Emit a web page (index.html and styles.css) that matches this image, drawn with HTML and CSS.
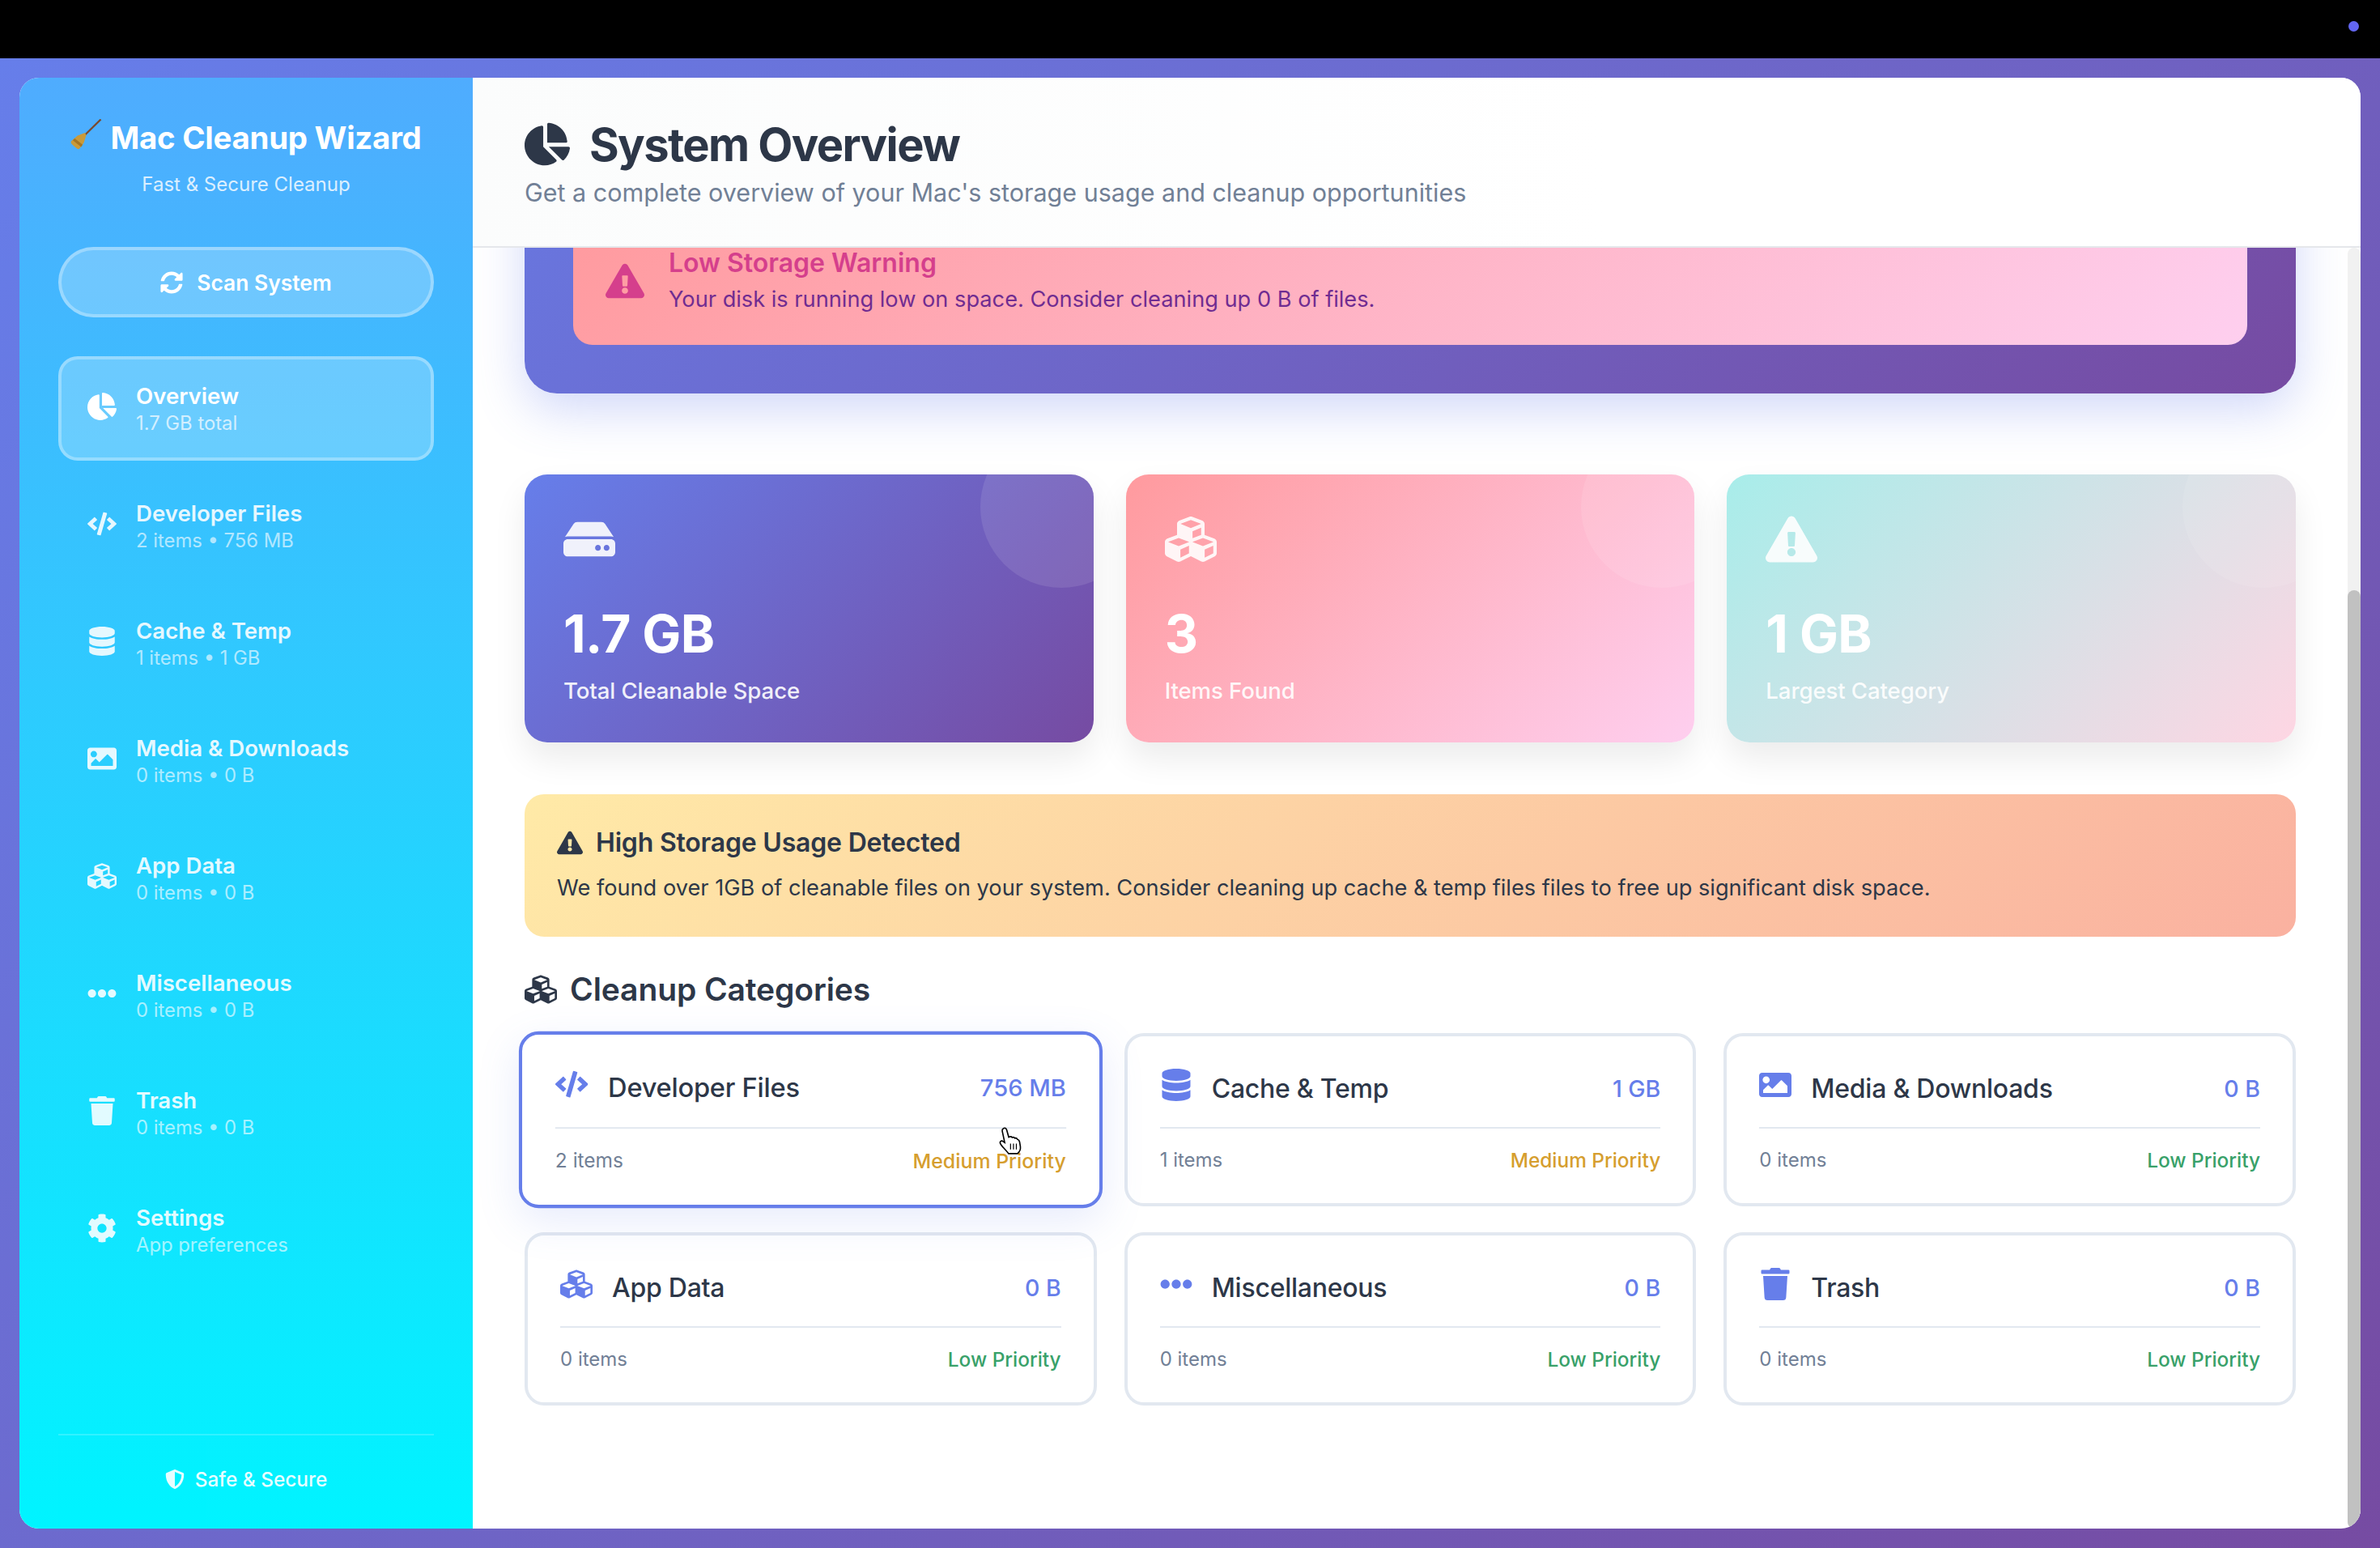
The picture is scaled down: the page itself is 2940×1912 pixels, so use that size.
FILE: index.html
```html
<!DOCTYPE html>
<html lang="en">
<head>
<meta charset="utf-8">
<title>Mac Cleanup Wizard</title>
<link rel="stylesheet" href="styles.css">
</head>
<body>
<svg class="sprite" aria-hidden="true">
  <symbol id="i-pie" viewBox="0 0 544 512"><path d="M527.79 288H290.5l158.03 158.03c6.04 6.04 15.98 6.53 22.19.68 38.7-36.46 65.32-85.61 73.13-140.86 1.34-9.46-6.51-17.85-16.06-17.85zm-15.83-64.8C503.72 103.74 408.26 8.28 288.8.04 279.68-.59 272 7.1 272 16.24V240h223.77c9.14 0 16.82-7.68 16.19-16.8zM224 288V50.71c0-9.55-8.39-17.4-17.84-16.06C86.99 51.49-4.1 155.6.14 280.37 4.5 408.51 114.83 513.59 243.03 511.98c50.4-.63 96.97-16.87 135.26-44.03 7.9-5.6 8.42-17.23 1.57-24.08L224 288z"/></symbol>
  <symbol id="i-sync" viewBox="0 0 512 512"><path d="M370.72 133.28C339.458 104.008 298.888 87.962 255.848 88c-77.458.068-144.328 53.178-162.791 126.85-1.344 5.363-6.122 9.15-11.651 9.15H24.103c-7.498 0-13.194-6.807-11.807-14.176C33.933 94.924 134.813 8 256 8c66.448 0 126.791 26.136 171.315 68.685L463.03 40.97C478.149 25.851 504 36.559 504 57.941V192c0 13.255-10.745 24-24 24H345.941c-21.382 0-32.09-25.851-16.971-40.971l41.75-41.749zM32 296h134.059c21.382 0 32.09 25.851 16.971 40.971l-41.75 41.75c31.262 29.273 71.835 45.319 114.876 45.28 77.418-.07 144.315-53.144 162.787-126.849 1.344-5.363 6.122-9.15 11.651-9.15h57.304c7.498 0 13.194 6.807 11.807 14.176C478.067 417.076 377.187 504 256 504c-66.448 0-126.791-26.136-171.315-68.685L48.97 471.03C33.851 486.149 8 475.441 8 454.059V320c0-13.255 10.745-24 24-24z"/></symbol>
  <symbol id="i-code" viewBox="0 0 640 512"><path d="M278.9 511.5l-61-17.7c-6.4-1.8-10-8.5-8.2-14.9L346.2 8.7c1.8-6.4 8.5-10 14.9-8.2l61 17.7c6.4 1.8 10 8.5 8.2 14.9L293.8 503.3c-1.9 6.4-8.5 10.1-14.9 8.2zm-114-112.2l43.5-46.4c4.6-4.9 4.3-12.7-.8-17.2L117 256l90.6-79.7c5.1-4.5 5.5-12.3.8-17.2l-43.5-46.4c-4.5-4.8-12.1-5.1-17-.5L3.8 247.2c-5.1 4.7-5.1 12.8 0 17.5l144.1 135.1c4.9 4.6 12.5 4.4 17-.5zm327.2.6l144.1-135.1c5.1-4.7 5.1-12.8 0-17.5L492.1 112.1c-4.8-4.5-12.4-4.3-17 .5L431.6 159c-4.6 4.9-4.3 12.7.8 17.2L523 256l-90.6 79.7c-5.1 4.5-5.5 12.3-.8 17.2l43.5 46.4c4.5 4.9 12.1 5.1 17 .6z"/></symbol>
  <symbol id="i-db" viewBox="0 0 448 512"><path d="M448 73.143v45.714C448 159.143 347.667 192 224 192S0 159.143 0 118.857V73.143C0 32.857 100.333 0 224 0s224 32.857 224 73.143zM448 176v102.857C448 319.143 347.667 352 224 352S0 319.143 0 278.857V176c48.125 33.143 136.208 48.572 224 48.572S399.874 209.143 448 176zm0 160v102.857C448 479.143 347.667 512 224 512S0 479.143 0 438.857V336c48.125 33.143 136.208 48.572 224 48.572S399.874 369.143 448 336z"/></symbol>
  <symbol id="i-image" viewBox="0 0 512 512"><path d="M464 448H48c-26.51 0-48-21.49-48-48V112c0-26.51 21.49-48 48-48h416c26.51 0 48 21.49 48 48v288c0 26.51-21.49 48-48 48zM112 120c-30.928 0-56 25.072-56 56s25.072 56 56 56 56-25.072 56-56-25.072-56-56-56zM64 384h384V272l-87.515-87.515c-4.686-4.686-12.284-4.686-16.971 0L208 320l-55.515-55.515c-4.686-4.686-12.284-4.686-16.971 0L64 336v48z"/></symbol>
  <symbol id="i-cubes" viewBox="0 0 512 512"><path d="M488.6 250.2L392 214V105.5c0-15-9.3-28.4-23.4-33.7l-100-37.5c-8.1-3.1-17.1-3.1-25.3 0l-100 37.5c-14.1 5.3-23.4 18.7-23.4 33.7V214l-96.6 36.2C9.3 255.5 0 268.9 0 283.9V394c0 13.6 7.7 26.1 19.9 32.2l100 50c10.1 5.1 22.1 5.1 32.2 0l103.9-52 103.9 52c10.1 5.1 22.1 5.1 32.2 0l100-50c12.2-6.1 19.9-18.6 19.9-32.2V283.9c0-15-9.3-28.4-23.4-33.7zM358 214.8l-85 31.9v-68.2l85-37v73.3zM154 104.1l102-38.2 102 38.2v.6l-102 41.4-102-41.4v-.6zm84 291.1l-85 42.5v-79.1l85-38.8v75.4zm0-112l-102 41.4-102-41.4v-.6l102-38.2 102 38.2v.6zm240 112l-85 42.5v-79.1l85-38.8v75.4zm0-112l-102 41.4-102-41.4v-.6l102-38.2 102 38.2v.6z"/></symbol>
  <symbol id="i-dots" viewBox="0 0 512 512"><path d="M328 256c0 39.8-32.2 72-72 72s-72-32.2-72-72 32.2-72 72-72 72 32.2 72 72zm104-72c-39.8 0-72 32.2-72 72s32.2 72 72 72 72-32.2 72-72-32.2-72-72-72zm-352 0c-39.8 0-72 32.2-72 72s32.2 72 72 72 72-32.2 72-72-32.2-72-72-72z"/></symbol>
  <symbol id="i-trash" viewBox="0 0 448 512"><path d="M432 32H312l-9.4-18.7A24 24 0 0 0 281.1 0H166.8a23.72 23.72 0 0 0-21.4 13.3L136 32H16A16 16 0 0 0 0 48v32a16 16 0 0 0 16 16h416a16 16 0 0 0 16-16V48a16 16 0 0 0-16-16zM53.2 467a48 48 0 0 0 47.9 45h245.8a48 48 0 0 0 47.9-45L416 128H32z"/></symbol>
  <symbol id="i-cog" viewBox="0 0 512 512"><path d="M487.4 315.7l-42.6-24.6c4.3-23.2 4.3-47 0-70.2l42.6-24.6c4.9-2.8 7.1-8.6 5.5-14-11.1-35.6-30-67.8-54.7-94.6-3.8-4.1-10-5.1-14.8-2.3L380.8 110c-17.9-15.4-38.5-27.3-60.8-35.1V25.8c0-5.6-3.9-10.5-9.4-11.7-36.7-8.2-74.3-7.8-109.2 0-5.5 1.2-9.4 6.1-9.4 11.7V75c-22.2 7.9-42.8 19.8-60.8 35.1L88.7 85.5c-4.9-2.8-11-1.9-14.8 2.3-24.7 26.7-43.6 58.9-54.7 94.6-1.7 5.4.6 11.2 5.5 14L67.3 221c-4.3 23.2-4.3 47 0 70.2l-42.6 24.6c-4.9 2.8-7.1 8.6-5.5 14 11.1 35.6 30 67.8 54.7 94.6 3.8 4.1 10 5.1 14.8 2.3l42.6-24.6c17.9 15.4 38.5 27.3 60.8 35.1v49.2c0 5.6 3.9 10.5 9.4 11.7 36.7 8.2 74.3 7.8 109.2 0 5.5-1.2 9.4-6.1 9.4-11.7v-49.2c22.2-7.9 42.8-19.8 60.8-35.1l42.6 24.6c4.9 2.8 11 1.9 14.8-2.3 24.7-26.7 43.6-58.9 54.7-94.6 1.5-5.5-.7-11.3-5.6-14.1zM256 336c-44.1 0-80-35.9-80-80s35.9-80 80-80 80 35.9 80 80-35.9 80-80 80z"/></symbol>
  <symbol id="i-shield" viewBox="0 0 512 512"><path d="M466.5 83.7l-192-80a48.15 48.15 0 0 0-36.9 0l-192 80C27.7 91.1 16 108.6 16 128c0 198.5 114.5 335.7 221.5 380.3 11.8 4.9 25.1 4.9 36.9 0C360.1 472.6 496 349.3 496 128c0-19.4-11.7-36.9-29.5-44.3zM256.1 446.3l-.1-381 175.9 73.3c-3.3 151.4-82.1 261.1-175.8 307.7z"/></symbol>
  <symbol id="i-warn" viewBox="0 0 576 512"><path d="M569.517 440.013C587.975 472.007 564.806 512 527.94 512H48.054c-36.937 0-59.999-40.055-41.577-71.987L246.423 23.985c18.467-32.009 64.72-31.951 83.154 0l239.94 416.028zM288 354c-25.405 0-46 20.595-46 46s20.595 46 46 46 46-20.595 46-46-20.595-46-46-46zm-43.673-165.346l7.418 136c.347 6.364 5.609 11.346 11.982 11.346h48.546c6.373 0 11.635-4.982 11.982-11.346l7.418-136c.375-6.874-5.098-12.654-11.982-12.654h-63.383c-6.884 0-12.356 5.78-11.981 12.654z"/></symbol>
  <symbol id="i-hdd" viewBox="0 0 576 512"><path d="M576 304v96c0 26.51-21.49 48-48 48H48c-26.51 0-48-21.49-48-48v-96c0-26.51 21.49-48 48-48h480c26.51 0 48 21.49 48 48zm-48-80a79.557 79.557 0 0 1 30.777 6.165L462.25 85.374A48.003 48.003 0 0 0 422.311 64H153.689a48 48 0 0 0-39.938 21.374L17.223 230.165A79.557 79.557 0 0 1 48 224h480zm-48 96c-17.673 0-32 14.327-32 32s14.327 32 32 32 32-14.327 32-32-14.327-32-32-32zm-96 0c-17.673 0-32 14.327-32 32s14.327 32 32 32 32-14.327 32-32-14.327-32-32-32z"/></symbol>
</svg>

<div class="menubar"><span class="menubar-dot"></span></div>

<div class="stage">
  <div class="window">
    <aside class="sidebar">
      <div class="brand">
        <h1 class="brand-title">
          <svg class="broom" viewBox="0 0 40 40" aria-hidden="true">
            <path class="broom-handle" d="M38.5 0.5 L17 21.5"/>
            <path class="broom-head" d="M18.500 17.500 L9 21 L1 28 C0 30 1 31.500 2.500 32.500 L7.500 37 C9 38.500 11 38.500 12 37 L17 30 L20 20.500 Z"/>
            <path class="broom-band" d="M5.500 24.500 L15.500 32.500 L13.500 35.500 L3 27 Z"/>
          </svg>
          <span>Mac Cleanup Wizard</span>
        </h1>
        <p class="brand-sub">Fast &amp; Secure Cleanup</p>
      </div>
      <button class="scan-btn"><svg class="scan-icon"><use href="#i-sync"/></svg>Scan System</button>
      <nav class="nav">
        <a class="nav-item is-active"><svg class="nav-icon"><use href="#i-pie"/></svg><span class="nav-text"><span class="nav-label">Overview</span><span class="nav-sub">1.7 GB total</span></span></a>
        <a class="nav-item"><svg class="nav-icon"><use href="#i-code"/></svg><span class="nav-text"><span class="nav-label">Developer Files</span><span class="nav-sub">2 items • 756 MB</span></span></a>
        <a class="nav-item"><svg class="nav-icon"><use href="#i-db"/></svg><span class="nav-text"><span class="nav-label">Cache &amp; Temp</span><span class="nav-sub">1 items • 1 GB</span></span></a>
        <a class="nav-item"><svg class="nav-icon"><use href="#i-image"/></svg><span class="nav-text"><span class="nav-label">Media &amp; Downloads</span><span class="nav-sub">0 items • 0 B</span></span></a>
        <a class="nav-item"><svg class="nav-icon"><use href="#i-cubes"/></svg><span class="nav-text"><span class="nav-label">App Data</span><span class="nav-sub">0 items • 0 B</span></span></a>
        <a class="nav-item"><svg class="nav-icon"><use href="#i-dots"/></svg><span class="nav-text"><span class="nav-label">Miscellaneous</span><span class="nav-sub">0 items • 0 B</span></span></a>
        <a class="nav-item"><svg class="nav-icon"><use href="#i-trash"/></svg><span class="nav-text"><span class="nav-label">Trash</span><span class="nav-sub">0 items • 0 B</span></span></a>
        <a class="nav-item"><svg class="nav-icon"><use href="#i-cog"/></svg><span class="nav-text"><span class="nav-label">Settings</span><span class="nav-sub">App preferences</span></span></a>
      </nav>
      <div class="side-foot"><svg class="foot-icon"><use href="#i-shield"/></svg>Safe &amp; Secure</div>
    </aside>

    <main class="main">
      <header class="page-head">
        <h2 class="page-title"><svg class="page-icon"><use href="#i-pie"/></svg>System Overview</h2>
        <p class="page-sub">Get a complete overview of your Mac's storage usage and cleanup opportunities</p>
      </header>
      <div class="body-row">
        <div class="scroller">
          <section class="hero">
            <div class="warn">
              <svg class="warn-icon"><use href="#i-warn"/></svg>
              <div>
                <div class="warn-title">Low Storage Warning</div>
                <div class="warn-text">Your disk is running low on space. Consider cleaning up 0 B of files.</div>
              </div>
            </div>
          </section>

          <section class="stats">
            <div class="stat stat-blue"><svg class="stat-icon"><use href="#i-hdd"/></svg><div class="stat-value">1.7 GB</div><div class="stat-label">Total Cleanable Space</div></div>
            <div class="stat stat-pink"><svg class="stat-icon"><use href="#i-cubes"/></svg><div class="stat-value">3</div><div class="stat-label">Items Found</div></div>
            <div class="stat stat-mint"><svg class="stat-icon"><use href="#i-warn"/></svg><div class="stat-value">1 GB</div><div class="stat-label">Largest Category</div></div>
          </section>

          <section class="alert">
            <div class="alert-title"><svg class="alert-icon"><use href="#i-warn"/></svg>High Storage Usage Detected</div>
            <p class="alert-text">We found over 1GB of cleanable files on your system. Consider cleaning up cache &amp; temp files files to free up significant disk space.</p>
          </section>

          <h3 class="section-title"><svg class="section-icon"><use href="#i-cubes"/></svg>Cleanup Categories</h3>

          <section class="cats">
            <article class="cat is-hover">
              <div class="cat-head"><svg class="cat-icon"><use href="#i-code"/></svg><span class="cat-name">Developer Files</span><span class="cat-size">756 MB</span></div>
              <div class="cat-foot"><span class="cat-count">2 items</span><span class="cat-prio prio-med">Medium Priority</span></div>
              <svg class="cursor" viewBox="0 0 30 36" aria-hidden="true"><path d="M6 2.500c1.600-1 3.200 0 3.700 1.600l2.600 9 1.200-.5c1.300-.4 2.400 0 3 .9 1.200-.5 2.600-.2 3.200.9 1.300-.4 2.500.1 3.100 1.300 1.300.3 2.300 1.400 2.600 3l1 6c.4 3.500-1 6.300-3.600 8.300H12c-1.600-2.200-3.600-4.400-6.400-7.400-1.600-1.800-3.600-4-3.800-5.800-.1-1.400 1.200-2.500 2.800-2l2.800 1.800L4.400 5.600C4.100 4.500 4.900 3.200 6 2.500z"/><path class="cursor-lines" d="M14.500 21v7M18 21v7M21.500 21v7"/></svg>
            </article>
            <article class="cat">
              <div class="cat-head"><svg class="cat-icon"><use href="#i-db"/></svg><span class="cat-name">Cache &amp; Temp</span><span class="cat-size">1 GB</span></div>
              <div class="cat-foot"><span class="cat-count">1 items</span><span class="cat-prio prio-med">Medium Priority</span></div>
            </article>
            <article class="cat">
              <div class="cat-head"><svg class="cat-icon"><use href="#i-image"/></svg><span class="cat-name">Media &amp; Downloads</span><span class="cat-size">0 B</span></div>
              <div class="cat-foot"><span class="cat-count">0 items</span><span class="cat-prio prio-low">Low Priority</span></div>
            </article>
            <article class="cat">
              <div class="cat-head"><svg class="cat-icon"><use href="#i-cubes"/></svg><span class="cat-name">App Data</span><span class="cat-size">0 B</span></div>
              <div class="cat-foot"><span class="cat-count">0 items</span><span class="cat-prio prio-low">Low Priority</span></div>
            </article>
            <article class="cat">
              <div class="cat-head"><svg class="cat-icon"><use href="#i-dots"/></svg><span class="cat-name">Miscellaneous</span><span class="cat-size">0 B</span></div>
              <div class="cat-foot"><span class="cat-count">0 items</span><span class="cat-prio prio-low">Low Priority</span></div>
            </article>
            <article class="cat">
              <div class="cat-head"><svg class="cat-icon"><use href="#i-trash"/></svg><span class="cat-name">Trash</span><span class="cat-size">0 B</span></div>
              <div class="cat-foot"><span class="cat-count">0 items</span><span class="cat-prio prio-low">Low Priority</span></div>
            </article>
          </section>
        </div>
        <div class="scroll-track"><div class="scroll-thumb"></div></div>
      </div>
    </main>
  </div>
</div>
</body>
</html>
```

FILE: styles.css
```css
* { box-sizing: border-box; }
html, body { height: 100%; }
body {
  margin: 0;
  background: #000;
  font-family: Inter, "Liberation Sans", sans-serif;
  color: #2d3748;
  display: flex;
  flex-direction: column;
  overflow: hidden;
}
h1, h2, h3, p { margin: 0; }
svg { fill: currentColor; flex: none; display: block; }
.sprite { display: none; }

.menubar {
  height: 72px;
  flex: none;
  display: flex;
  align-items: center;
  justify-content: flex-end;
  padding-right: 26px;
  padding-bottom: 8px;
}
.menubar-dot { width: 13px; height: 13px; border-radius: 50%; background: #6366f1; }

.stage {
  flex: 1;
  min-height: 0;
  padding: 24px;
  background: linear-gradient(135deg, #667eea 0%, #764ba2 100%);
  display: flex;
}
.window {
  flex: 1;
  min-width: 0;
  display: flex;
  border-radius: 24px;
  overflow: hidden;
  background: #fff;
}

/* Sidebar */
.sidebar {
  width: 560px;
  flex: none;
  display: flex;
  flex-direction: column;
  padding: 49px 48px 0;
  color: #fff;
  background: linear-gradient(180deg, #4facfe 0%, #00f4ff 100%);
}
.brand { text-align: center; margin-bottom: 61px; }
.brand-title {
  display: flex;
  justify-content: center;
  align-items: center;
  gap: 10px;
  font-size: 38.4px;
  line-height: 50px;
  font-weight: 700;
  letter-spacing: -0.25px;
  white-space: nowrap;
}
.broom { width: 39px; height: 39px; margin-top: -8px; }
.broom-handle { fill: none; stroke: #7a4a2f; stroke-width: 2.400; }
.broom-head { fill: #c99a3a; }
.broom-band { fill: #a67524; }
.brand-sub { margin-top: 17px; font-size: 24px; line-height: 32px; opacity: .8; }

.scan-btn {
  height: 87px;
  width: 100%;
  display: flex;
  align-items: center;
  justify-content: center;
  gap: 17px;
  border: 4px solid rgba(255,255,255,.3);
  border-radius: 44px;
  background: rgba(255,255,255,.23);
  color: #fff;
  font: 600 26.4px/34px Inter, "Liberation Sans", sans-serif;
  margin-bottom: 48px;
  padding: 0;
}
.scan-icon { width: 28px; height: 28px; }

.nav { display: flex; flex-direction: column; gap: 16px; flex: 1; }
.nav-item {
  height: 129px;
  display: flex;
  align-items: center;
  gap: 24px;
  padding: 0 32px;
  border: 4px solid transparent;
  border-radius: 24px;
  opacity: .88;
}
.nav-item.is-active {
  background: rgba(255,255,255,.23);
  border-color: rgba(255,255,255,.3);
  opacity: 1;
}
.nav-icon { width: 36px; height: 36px; margin-top: -6px; }
.nav-text { display: flex; flex-direction: column; padding-top: 3px; }
.nav-label { font-size: 27.6px; line-height: 34px; font-weight: 600; }
.nav-sub { font-size: 23.8px; line-height: 34px; opacity: .7; }

.side-foot {
  height: 117px;
  border-top: 2px solid rgba(255,255,255,.2);
  display: flex;
  align-items: center;
  justify-content: center;
  gap: 13px;
  font-size: 24.4px;
  font-weight: 500;
  opacity: .9;
  padding-bottom: 7px;
}
.foot-icon { width: 24px; height: 24px; }

/* Main */
.main { flex: 1; min-width: 0; display: flex; flex-direction: column; }
.page-head {
  height: 210px;
  flex: none;
  padding: 49px 64px 0;
  border-bottom: 2px solid #e5e7eb;
  background: linear-gradient(90deg, #fbfcfc 0%, #fff 60%);
  position: relative;
  z-index: 1;
}
.page-title {
  display: flex;
  align-items: center;
  gap: 24px;
  font-size: 56px;
  line-height: 68px;
  font-weight: 700;
  letter-spacing: -1.6px;
}
.page-icon { width: 56px; height: 56px; margin-top: -2px; }
.page-sub { margin-top: 1px; font-size: 30.5px; line-height: 48px; color: #718096; }

.body-row { flex: 1; min-height: 0; display: flex; }
.scroller {
  flex: 1;
  min-width: 0;
  overflow: hidden;
  display: flex;
  flex-direction: column;
  justify-content: flex-end;
  padding: 0 64px 152px;
}
.scroller > * { flex: none; }
.scroll-track { width: 16px; flex: none; background: #f1f1f1; border-radius: 8px; display: flex; align-items: flex-end; }
.scroll-thumb { width: 100%; height: 1159px; background: #c1c1c1; border-radius: 8px; }

.hero {
  padding: 472px 60px 60px;
  margin-bottom: 100px;
  border-radius: 40px;
  background: linear-gradient(135deg, #667eea 0%, #764ba2 100%);
  box-shadow: 0 20px 60px rgba(102,126,234,.3);
}
.warn {
  display: flex;
  align-items: center;
  gap: 30px;
  padding: 40px 40px 38px;
  border-radius: 24px;
  background: linear-gradient(135deg, #ff9a9e 0%, #fecfef 100%);
}
.warn-icon { width: 48px; height: 48px; color: #d53f8c; }
.warn-title { font-size: 32px; line-height: 40px; font-weight: 600; color: #d53f8c; margin-bottom: 7px; }
.warn-text { font-size: 27.2px; line-height: 36px; color: #702c91; }

.stats { display: grid; grid-template-columns: repeat(3, 1fr); gap: 40px; margin-bottom: 64px; }
.stat {
  position: relative;
  overflow: hidden;
  padding: 48px 48px 42px;
  border-radius: 28px;
  color: #fff;
  box-shadow: 0 20px 40px rgba(0,0,0,.08);
}
.stat::before {
  content: "";
  position: absolute;
  top: -60px;
  right: -60px;
  width: 200px;
  height: 200px;
  border-radius: 50%;
  background: rgba(255,255,255,.1);
}
.stat-blue { background: linear-gradient(135deg, #667eea 0%, #764ba2 100%); }
.stat-pink { background: linear-gradient(135deg, #ff9a9e 0%, #fecfef 100%); }
.stat-mint { background: linear-gradient(135deg, #a8edea 0%, #fed6e3 100%); }
.stat-icon { width: 64px; height: 64px; opacity: .9; margin-bottom: 46px; }
.stat-value { font-size: 64px; line-height: 77px; font-weight: 700; letter-spacing: -.6px; margin-bottom: 10px; }
.stat-label { font-size: 27.6px; line-height: 45px; font-weight: 500; letter-spacing: -.1px; opacity: .9; margin-bottom: -1px; }

.alert {
  padding: 40px 40px 38px;
  border-radius: 24px;
  background: linear-gradient(135deg, #ffeaa7 0%, #fab1a0 100%);
  margin-bottom: 38px;
}
.alert-title { display: flex; align-items: center; gap: 16px; font-size: 32px; line-height: 40px; font-weight: 600; letter-spacing: -.2px; margin-bottom: 14px; }
.alert-icon { width: 32px; height: 32px; }
.alert-text { font-size: 27.2px; line-height: 44px; }

.section-title { display: flex; align-items: center; gap: 16px; font-size: 39px; line-height: 54px; font-weight: 600; letter-spacing: -.1px; margin-bottom: 27px; }
.section-icon { width: 40px; height: 40px; }

.cats { display: grid; grid-template-columns: repeat(3, 1fr); gap: 32px 34px; }
.cat {
  position: relative;
  padding: 40px 40px 39px;
  border: 4px solid #e2e8f0;
  border-radius: 24px;
  background: #fff;
}
.cat.is-hover {
  transform: scale(1.02);
  border-color: #667eea;
  box-shadow: 0 16px 50px rgba(102,126,234,.15);
  z-index: 1;
}
.cat-head {
  display: flex;
  align-items: flex-start;
  gap: 24px;
  min-height: 74px;
  border-bottom: 2px solid #e2e8f0;
  margin-bottom: 25px;
}
.cat-icon { width: 40px; height: 40px; color: #667eea; }
.cat-name { flex: 1; font-size: 32px; line-height: 50px; font-weight: 500; letter-spacing: -.25px; }
.cat-size { font-size: 28.5px; line-height: 50px; font-weight: 500; color: #667eea; }
.cat-foot { display: flex; justify-content: space-between; align-items: center; font-size: 24px; line-height: 28px; }
.cat-count { color: #718096; }
.cat-prio { font-weight: 500; font-size: 24.4px; }
.prio-med { color: #d69e2e; }
.prio-low { color: #38a169; }

.cursor {
  position: absolute;
  right: 92px;
  top: 111px;
  width: 30px;
  height: 36px;
  fill: #fff;
  stroke: #000;
  stroke-width: 1.6px;
  z-index: 2;
}
.cursor-lines { fill: none; stroke-width: 1.2px; }
```
